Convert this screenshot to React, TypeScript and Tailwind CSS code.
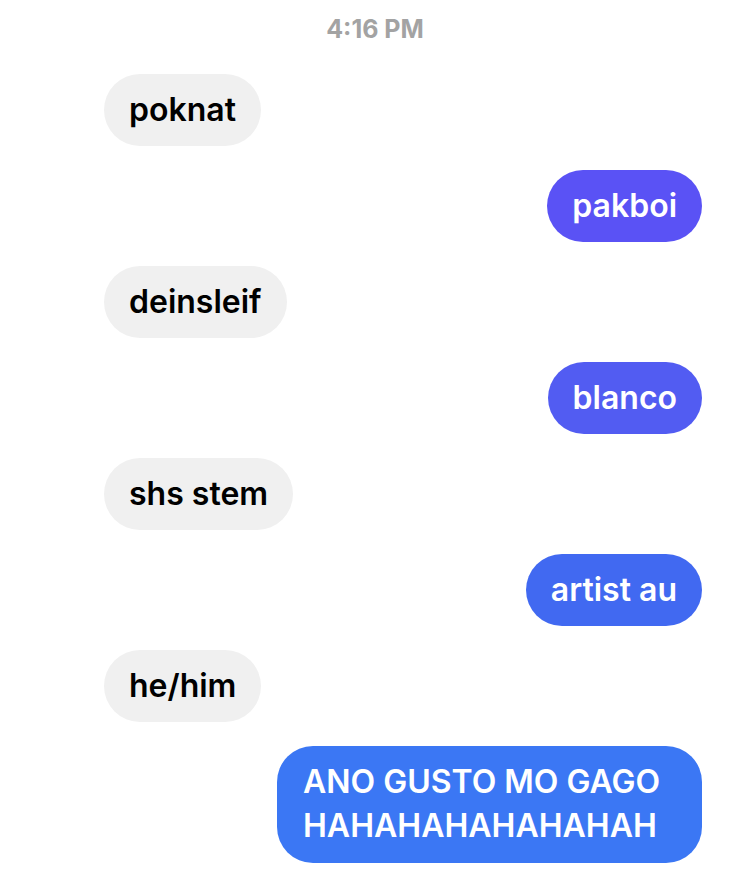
import React from "react";

type Msg = { text: string; me: boolean; color?: string };

const msgs: Msg[] = [
  { text: "poknat", me: false },
  { text: "pakboi", me: true, color: "bg-[#5a52f5]" },
  { text: "deinsleif", me: false },
  { text: "blanco", me: true, color: "bg-[#525cf2]" },
  { text: "shs stem", me: false },
  { text: "artist au", me: true, color: "bg-[#4169f1]" },
  { text: "he/him", me: false },
];

export default function App() {
  return (
    <div
      className="w-[750px] h-[874px] bg-white overflow-hidden flex flex-col"
      style={{ fontFamily: "Inter, 'Liberation Sans', sans-serif" }}
    >
      <div className="h-[74px] pt-[14px] flex justify-center">
        <span className="text-[25px] leading-[30px] font-bold text-[#a3a3a3]">4:16 PM</span>
      </div>
      <div className="flex flex-col gap-6 pl-[104px] pr-[48px]">
        {msgs.map((m, i) => (
          <div key={i} className={m.me ? "flex justify-end" : "flex justify-start"}>
            <div
              className={
                m.me
                  ? `h-[72px] px-[25px] rounded-full flex items-center text-white text-[32px] font-semibold ${m.color}`
                  : "h-[72px] px-[25px] rounded-full flex items-center text-black bg-[#f0f0f0] text-[32px] font-semibold"
              }
            >
              {m.text}
            </div>
          </div>
        ))}
        <div className="flex justify-end">
          <div className="w-[425px] h-[117px] rounded-[36px] bg-[#3b77f4] text-white text-[32px] font-semibold leading-[44px] px-[26px] pt-[14px] whitespace-nowrap">
            ANO GUSTO MO GAGO
            <br />
            HAHAHAHAHAHAHAH
          </div>
        </div>
      </div>
    </div>
  );
}
